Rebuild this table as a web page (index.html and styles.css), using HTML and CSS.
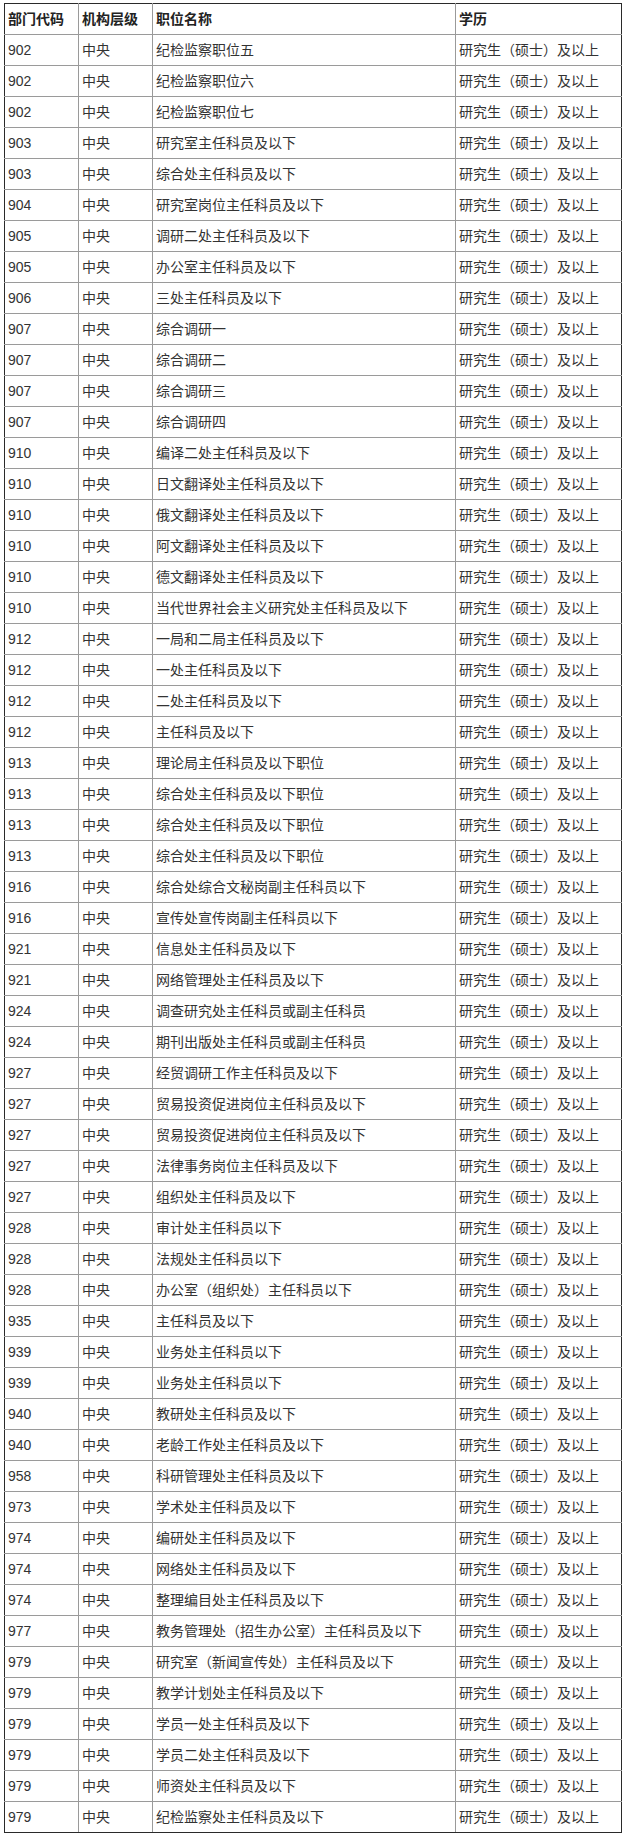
FILE: index.html
```html
<!DOCTYPE html>
<html lang="zh-CN">
<head>
<meta charset="utf-8">
<title>职位表</title>
<link rel="stylesheet" href="styles.css">
</head>
<body>
<table class="jobs">
<colgroup><col class="c-code"><col class="c-level"><col class="c-name"><col class="c-edu"></colgroup>
<thead>
<tr><th>部门代码</th><th>机构层级</th><th>职位名称</th><th>学历</th></tr>
</thead>
<tbody>
<tr><td>902</td><td>中央</td><td>纪检监察职位五</td><td>研究生（硕士）及以上</td></tr>
<tr><td>902</td><td>中央</td><td>纪检监察职位六</td><td>研究生（硕士）及以上</td></tr>
<tr><td>902</td><td>中央</td><td>纪检监察职位七</td><td>研究生（硕士）及以上</td></tr>
<tr><td>903</td><td>中央</td><td>研究室主任科员及以下</td><td>研究生（硕士）及以上</td></tr>
<tr><td>903</td><td>中央</td><td>综合处主任科员及以下</td><td>研究生（硕士）及以上</td></tr>
<tr><td>904</td><td>中央</td><td>研究室岗位主任科员及以下</td><td>研究生（硕士）及以上</td></tr>
<tr><td>905</td><td>中央</td><td>调研二处主任科员及以下</td><td>研究生（硕士）及以上</td></tr>
<tr><td>905</td><td>中央</td><td>办公室主任科员及以下</td><td>研究生（硕士）及以上</td></tr>
<tr><td>906</td><td>中央</td><td>三处主任科员及以下</td><td>研究生（硕士）及以上</td></tr>
<tr><td>907</td><td>中央</td><td>综合调研一</td><td>研究生（硕士）及以上</td></tr>
<tr><td>907</td><td>中央</td><td>综合调研二</td><td>研究生（硕士）及以上</td></tr>
<tr><td>907</td><td>中央</td><td>综合调研三</td><td>研究生（硕士）及以上</td></tr>
<tr><td>907</td><td>中央</td><td>综合调研四</td><td>研究生（硕士）及以上</td></tr>
<tr><td>910</td><td>中央</td><td>编译二处主任科员及以下</td><td>研究生（硕士）及以上</td></tr>
<tr><td>910</td><td>中央</td><td>日文翻译处主任科员及以下</td><td>研究生（硕士）及以上</td></tr>
<tr><td>910</td><td>中央</td><td>俄文翻译处主任科员及以下</td><td>研究生（硕士）及以上</td></tr>
<tr><td>910</td><td>中央</td><td>阿文翻译处主任科员及以下</td><td>研究生（硕士）及以上</td></tr>
<tr><td>910</td><td>中央</td><td>德文翻译处主任科员及以下</td><td>研究生（硕士）及以上</td></tr>
<tr><td>910</td><td>中央</td><td>当代世界社会主义研究处主任科员及以下</td><td>研究生（硕士）及以上</td></tr>
<tr><td>912</td><td>中央</td><td>一局和二局主任科员及以下</td><td>研究生（硕士）及以上</td></tr>
<tr><td>912</td><td>中央</td><td>一处主任科员及以下</td><td>研究生（硕士）及以上</td></tr>
<tr><td>912</td><td>中央</td><td>二处主任科员及以下</td><td>研究生（硕士）及以上</td></tr>
<tr><td>912</td><td>中央</td><td>主任科员及以下</td><td>研究生（硕士）及以上</td></tr>
<tr><td>913</td><td>中央</td><td>理论局主任科员及以下职位</td><td>研究生（硕士）及以上</td></tr>
<tr><td>913</td><td>中央</td><td>综合处主任科员及以下职位</td><td>研究生（硕士）及以上</td></tr>
<tr><td>913</td><td>中央</td><td>综合处主任科员及以下职位</td><td>研究生（硕士）及以上</td></tr>
<tr><td>913</td><td>中央</td><td>综合处主任科员及以下职位</td><td>研究生（硕士）及以上</td></tr>
<tr><td>916</td><td>中央</td><td>综合处综合文秘岗副主任科员以下</td><td>研究生（硕士）及以上</td></tr>
<tr><td>916</td><td>中央</td><td>宣传处宣传岗副主任科员以下</td><td>研究生（硕士）及以上</td></tr>
<tr><td>921</td><td>中央</td><td>信息处主任科员及以下</td><td>研究生（硕士）及以上</td></tr>
<tr><td>921</td><td>中央</td><td>网络管理处主任科员及以下</td><td>研究生（硕士）及以上</td></tr>
<tr><td>924</td><td>中央</td><td>调查研究处主任科员或副主任科员</td><td>研究生（硕士）及以上</td></tr>
<tr><td>924</td><td>中央</td><td>期刊出版处主任科员或副主任科员</td><td>研究生（硕士）及以上</td></tr>
<tr><td>927</td><td>中央</td><td>经贸调研工作主任科员及以下</td><td>研究生（硕士）及以上</td></tr>
<tr><td>927</td><td>中央</td><td>贸易投资促进岗位主任科员及以下</td><td>研究生（硕士）及以上</td></tr>
<tr><td>927</td><td>中央</td><td>贸易投资促进岗位主任科员及以下</td><td>研究生（硕士）及以上</td></tr>
<tr><td>927</td><td>中央</td><td>法律事务岗位主任科员及以下</td><td>研究生（硕士）及以上</td></tr>
<tr><td>927</td><td>中央</td><td>组织处主任科员及以下</td><td>研究生（硕士）及以上</td></tr>
<tr><td>928</td><td>中央</td><td>审计处主任科员以下</td><td>研究生（硕士）及以上</td></tr>
<tr><td>928</td><td>中央</td><td>法规处主任科员以下</td><td>研究生（硕士）及以上</td></tr>
<tr><td>928</td><td>中央</td><td>办公室（组织处）主任科员以下</td><td>研究生（硕士）及以上</td></tr>
<tr><td>935</td><td>中央</td><td>主任科员及以下</td><td>研究生（硕士）及以上</td></tr>
<tr><td>939</td><td>中央</td><td>业务处主任科员以下</td><td>研究生（硕士）及以上</td></tr>
<tr><td>939</td><td>中央</td><td>业务处主任科员以下</td><td>研究生（硕士）及以上</td></tr>
<tr><td>940</td><td>中央</td><td>教研处主任科员及以下</td><td>研究生（硕士）及以上</td></tr>
<tr><td>940</td><td>中央</td><td>老龄工作处主任科员及以下</td><td>研究生（硕士）及以上</td></tr>
<tr><td>958</td><td>中央</td><td>科研管理处主任科员及以下</td><td>研究生（硕士）及以上</td></tr>
<tr><td>973</td><td>中央</td><td>学术处主任科员及以下</td><td>研究生（硕士）及以上</td></tr>
<tr><td>974</td><td>中央</td><td>编研处主任科员及以下</td><td>研究生（硕士）及以上</td></tr>
<tr><td>974</td><td>中央</td><td>网络处主任科员及以下</td><td>研究生（硕士）及以上</td></tr>
<tr><td>974</td><td>中央</td><td>整理编目处主任科员及以下</td><td>研究生（硕士）及以上</td></tr>
<tr><td>977</td><td>中央</td><td>教务管理处（招生办公室）主任科员及以下</td><td>研究生（硕士）及以上</td></tr>
<tr><td>979</td><td>中央</td><td>研究室（新闻宣传处）主任科员及以下</td><td>研究生（硕士）及以上</td></tr>
<tr><td>979</td><td>中央</td><td>教学计划处主任科员及以下</td><td>研究生（硕士）及以上</td></tr>
<tr><td>979</td><td>中央</td><td>学员一处主任科员及以下</td><td>研究生（硕士）及以上</td></tr>
<tr><td>979</td><td>中央</td><td>学员二处主任科员及以下</td><td>研究生（硕士）及以上</td></tr>
<tr><td>979</td><td>中央</td><td>师资处主任科员及以下</td><td>研究生（硕士）及以上</td></tr>
<tr><td>979</td><td>中央</td><td>纪检监察处主任科员及以下</td><td>研究生（硕士）及以上</td></tr>
</tbody>
</table>
</body>
</html>
```

FILE: styles.css
```css
html, body {
  margin: 0;
  padding: 0;
  background: #ffffff;
}

body {
  padding: 3px 0 0 4px;
  font-family: "Liberation Sans", Arial, "Noto Sans CJK SC", sans-serif;
  font-size: 14px;
  color: #333333;
}

.jobs {
  border-collapse: collapse;
  table-layout: fixed;
  width: 617px;
  border: 1px solid #2a2a2a;
}

.c-code { width: 74px; }
.c-level { width: 74px; }
.c-name { width: 303px; }
.c-edu { width: 166px; }

.jobs th,
.jobs td {
  box-sizing: border-box;
  height: 31px;
  padding: 0 0 0 3px;
  border: 1px solid #9a9a9a;
  text-align: left;
  vertical-align: middle;
  white-space: nowrap;
  line-height: 18px;
}

.jobs th {
  font-weight: bold;
  color: #222222;
}

.jobs tr > :first-child { border-left-color: #2a2a2a; }
.jobs tr > :last-child { border-right-color: #2a2a2a; }
.jobs thead th { border-top-color: #2a2a2a; }
.jobs tbody tr:last-child td { border-bottom-color: #2a2a2a; }
```
